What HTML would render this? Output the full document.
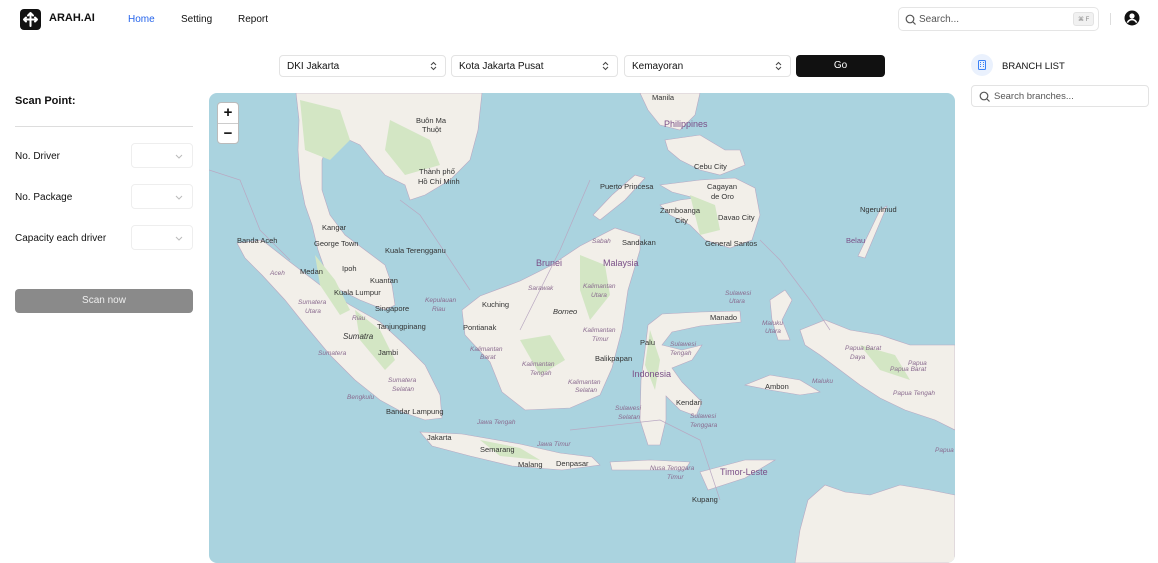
<!DOCTYPE html>
<html><head><meta charset="utf-8"><style>
*{box-sizing:border-box;margin:0;padding:0}
body{width:1158px;height:554px;overflow:hidden;background:#fff;font-family:"Liberation Sans",sans-serif;color:#111;position:relative}
.abs{position:absolute}
.nav{font-size:10px}
.sel{position:absolute;top:55px;height:22px;border:1px solid #e3e3e3;border-radius:4px;font-size:10px;padding:5px 7px;background:#fff}
.lbl{position:absolute;left:15px;font-size:10px}
.dd{position:absolute;left:131px;width:62px;height:25px;border:1px solid #eee;border-radius:4px}
.m{font-family:"Liberation Sans",sans-serif;font-size:7.5px;fill:#333}
.mi{font-family:"Liberation Sans",sans-serif;font-size:6.5px;fill:#8a6b8f;font-style:italic}
</style></head><body>
<div class="abs" style="left:20px;top:9px;width:21px;height:21px;background:#111;border-radius:4px">
<svg width="21" height="21" viewBox="0 0 21 21"><path d="M10.5 4v13M10.5 4l-2.5 2.5M10.5 4l2.5 2.5M4 10.5h13M4 10.5l2 -2M4 10.5l2 2M17 10.5l-2-2M17 10.5l-2 2" stroke="#fff" stroke-width="2" fill="none" stroke-linecap="round"/></svg></div>
<div class="abs" style="left:49px;top:12px;font-size:11px;font-weight:bold">ARAH.AI</div>
<div class="abs nav" style="left:128px;top:14px;color:#2463eb">Home</div>
<div class="abs nav" style="left:181px;top:14px">Setting</div>
<div class="abs nav" style="left:238px;top:14px">Report</div>
<div class="abs" style="left:898px;top:7px;width:201px;height:24px;border:1px solid #e5e5e5;border-radius:5px;font-size:10px;color:#555;padding:6px 0 0 20px">Search...
<svg class="abs" style="left:6px;top:6px" width="11" height="11"><circle cx="5" cy="5" r="3.8" stroke="#555" fill="none" stroke-width="1.2"/><path d="M8 8l2.5 2.5" stroke="#555" stroke-width="1.2"/></svg>
<div class="abs" style="left:174px;top:4px;width:21px;height:14px;background:#f1f1f1;border:1px solid #e3e3e3;border-radius:3px;font-size:6px;color:#888;padding:3px 0 0 4px">⌘ F</div></div>
<div class="abs" style="left:1110px;top:13px;width:1px;height:12px;background:#ddd"></div>
<svg class="abs" style="left:1124px;top:10px" width="16" height="16"><circle cx="8" cy="8" r="7.5" fill="#111"/><circle cx="8" cy="6" r="2.6" fill="#fff"/><path d="M3.3 12.6c1.3-2.2 3-3 4.7-3s3.4.8 4.7 3" stroke="#fff" stroke-width="1.6" fill="none"/></svg>

<div class="sel" style="left:279px;width:167px">DKI Jakarta<svg class="abs" style="right:8px;top:5px" width="7" height="10"><path d="M1 4l2.5-2.5L6 4M1 6l2.5 2.5L6 6" stroke="#444" fill="none"/></svg></div>
<div class="sel" style="left:451px;width:167px">Kota Jakarta Pusat<svg class="abs" style="right:8px;top:5px" width="7" height="10"><path d="M1 4l2.5-2.5L6 4M1 6l2.5 2.5L6 6" stroke="#444" fill="none"/></svg></div>
<div class="sel" style="left:624px;width:167px">Kemayoran<svg class="abs" style="right:8px;top:5px" width="7" height="10"><path d="M1 4l2.5-2.5L6 4M1 6l2.5 2.5L6 6" stroke="#444" fill="none"/></svg></div>
<div class="abs" style="left:796px;top:55px;width:89px;height:22px;background:#111;border-radius:4px;color:#fff;font-size:10px;text-align:center;line-height:22px">Go</div>

<div class="abs" style="left:971px;top:54px;width:22px;height:22px;border-radius:50%;background:#eaf1fd"><svg class="abs" style="left:7px;top:6px" width="8" height="10"><rect x=".5" y=".5" width="7" height="9" rx="1" fill="none" stroke="#3b82f6"/><path d="M2 2.5h1M5 2.5h1M2 4.5h1M5 4.5h1M2 6.5h1M5 6.5h1" stroke="#3b82f6"/></svg></div>
<div class="abs" style="left:1002px;top:61px;font-size:9.5px">BRANCH LIST</div>
<div class="abs" style="left:971px;top:85px;width:178px;height:22px;border:1px solid #e3e3e3;border-radius:4px;font-size:9.5px;color:#555;padding:5px 0 0 22px">Search branches...
<svg class="abs" style="left:7px;top:5px" width="11" height="11"><circle cx="5" cy="5" r="3.8" stroke="#555" fill="none" stroke-width="1.2"/><path d="M8 8l2.5 2.5" stroke="#555" stroke-width="1.2"/></svg></div>

<div class="abs" style="left:15px;top:95px;font-size:11px;font-weight:bold">Scan Point:</div>
<div class="abs" style="left:15px;top:126px;width:178px;height:1px;background:#ddd"></div>
<div class="lbl" style="top:151px">No. Driver</div><div class="dd" style="top:143px"><svg class="abs" style="right:9px;top:10px" width="8" height="5"><path d="M1 1l3 3 3-3" stroke="#bbb" fill="none"/></svg></div>
<div class="lbl" style="top:192px">No. Package</div><div class="dd" style="top:184px"><svg class="abs" style="right:9px;top:10px" width="8" height="5"><path d="M1 1l3 3 3-3" stroke="#bbb" fill="none"/></svg></div>
<div class="lbl" style="top:233px">Capacity each driver</div><div class="dd" style="top:225px"><svg class="abs" style="right:9px;top:10px" width="8" height="5"><path d="M1 1l3 3 3-3" stroke="#bbb" fill="none"/></svg></div>
<div class="abs" style="left:15px;top:289px;width:178px;height:24px;background:#8a8a8a;border-radius:4px;color:#eee;font-size:10px;text-align:center;line-height:24px">Scan now</div>

<div class="abs" style="left:209px;top:93px;width:746px;height:470px;border-radius:8px;overflow:hidden;background:#aad3df">
<svg width="746" height="470" viewBox="209 93 746 470">
<g fill="#f2efe9" stroke="#b9a8c2" stroke-width=".6">
<!-- Indochina + Malay peninsula -->
<path d="M296 93H482L478 130 470 160 450 180 425 195 410 200 405 185 385 175 372 160 360 145 345 138 330 140 322 160 322 190 330 215 345 235 365 250 385 265 392 285 395 305 385 310 360 300 340 290 325 270 318 250 312 225 305 205 300 180 298 150 299 120Z"/>
<!-- Sumatra -->
<path d="M237 243L262 240 290 262 320 285 350 305 380 322 405 345 425 365 440 395 442 418 425 420 402 412 380 400 355 380 330 355 305 325 285 300 262 275 245 258Z"/>
<!-- Borneo -->
<path d="M465 335L462 310 480 296 520 281 550 266 580 246 615 228 640 236 640 250 628 290 622 330 612 368 600 395 570 408 525 410 502 392 490 362Z"/>
<!-- Sulawesi -->
<path d="M648 325L662 314 700 312 740 311 741 322 700 326 672 332 662 345 682 350 702 345 692 360 672 368 682 382 702 402 696 416 680 410 666 396 666 420 660 445 648 445 640 420 641 380 645 350Z"/>
<!-- Java & Bali -->
<path d="M420 432L462 434 520 444 560 453 592 457 600 465 562 470 512 466 470 456 432 446Z"/>
<!-- Nusa Tenggara -->
<path d="M610 462L650 460 690 462 685 470 645 470 612 470Z"/>
<path d="M700 472L745 460 775 460 745 478 708 490Z"/>
<!-- Philippines -->
<path d="M640 93H700L695 115 680 130 660 125 648 110Z"/>
<path d="M665 140L700 135 725 150 740 150 745 165 720 175 700 170 680 160 668 150Z"/>
<path d="M660 185L700 180 735 178 755 188 760 215 752 240 730 248 705 240 690 225 670 215 660 205 680 200 695 198 672 192Z"/>
<path d="M635 175L645 178 625 200 600 220 593 215 612 195Z"/>
<!-- Halmahera / Maluku -->
<path d="M770 300L785 290 792 300 782 320 790 340 778 340 772 320Z"/>
<path d="M745 385L770 375 800 380 820 392 800 395 770 390Z"/>
<!-- Papua -->
<path d="M800 330L825 320 850 330 880 335 910 345 955 345V430L935 420 905 410 880 398 860 385 840 370 820 355 805 345Z"/>
<!-- Australia -->
<path d="M808 500L825 485 845 492 870 495 900 485 930 490 955 495V563H795L800 530Z"/>
<!-- Palau -->
<path d="M880 210L887 206 865 258 858 256Z"/>
</g>
<g fill="#d3e6c4">
<path d="M300 100l40 10 10 30-20 20-25-10z"/><path d="M390 120l40 20 10 25-35 10-20-25z"/>
<path d="M315 255l20 25 15 30-10 5-20-30z"/><path d="M355 310l25 20 15 30-10 10-25-30z"/>
<path d="M580 255l25 10 5 30-20 25-10-30z"/><path d="M520 340l30-5 15 25-25 15z"/>
<path d="M690 195l25 10 5 25-20 5z"/><path d="M860 345l35 10 15 25-30-10z"/>
<path d="M480 440l40 8 20 12-40-4z"/><path d="M650 330l10 30-5 30-10-25z"/>
</g>
<g fill="none" stroke="#b9a8c2" stroke-width=".7">
<path d="M209 170L240 180 260 230 290 260"/><path d="M590 180L560 250 520 330"/>
<path d="M760 240L780 260 810 300 830 330"/><path d="M400 200L420 215 470 290"/>
<path d="M570 430L660 420 700 440 720 500"/>
</g>
<g class="m">
<text x="652" y="100">Manila</text><text x="664" y="127" font-size="9" fill="#7a4f87">Philippines</text><text x="600" y="189">Puerto Princesa</text><text x="694" y="169">Cebu City</text><text x="707" y="189">Cagayan</text><text x="711" y="199">de Oro</text><text x="660" y="213">Zamboanga</text><text x="675" y="223">City</text><text x="718" y="220">Davao City</text><text x="860" y="212">Ngerulmud</text><text x="237" y="243">Banda Aceh</text><text x="314" y="246">George Town</text><text x="385" y="253">Kuala Terengganu</text><text x="300" y="274">Medan</text><text x="342" y="271">Ipoh</text><text x="370" y="283">Kuantan</text><text x="334" y="295">Kuala Lumpur</text><text x="375" y="311">Singapore</text><text x="377" y="329">Tanjungpinang</text><text x="343" y="339" font-style="italic" font-size="8">Sumatra</text><text x="378" y="355">Jambi</text><text x="482" y="307">Kuching</text><text x="463" y="330">Pontianak</text><text x="536" y="266" font-size="9" fill="#7a4f87">Brunei</text><text x="603" y="266" font-size="9" fill="#7a4f87">Malaysia</text><text x="553" y="314" font-style="italic">Borneo</text><text x="622" y="245">Sandakan</text><text x="705" y="246">General Santos</text><text x="710" y="320">Manado</text><text x="640" y="345">Palu</text><text x="632" y="377" font-size="9" fill="#7a4f87">Indonesia</text><text x="595" y="361">Balikpapan</text><text x="676" y="405">Kendari</text><text x="765" y="389">Ambon</text><text x="386" y="414">Bandar Lampung</text><text x="427" y="440">Jakarta</text><text x="480" y="452">Semarang</text><text x="518" y="467">Malang</text><text x="556" y="466">Denpasar</text><text x="720" y="475" font-size="9" fill="#7a4f87">Timor-Leste</text><text x="692" y="502">Kupang</text><text x="416" y="123">Buôn Ma</text><text x="422" y="132">Thuột</text><text x="419" y="174">Thành phố</text><text x="418" y="184">Hồ Chí Minh</text><text x="322" y="230">Kangar</text><text x="846" y="243" fill="#7a4f87">Belau</text>
</g>
<g class="mi"><text x="270" y="275">Aceh</text><text x="298" y="304">Sumatera</text><text x="305" y="313">Utara</text><text x="352" y="320">Riau</text><text x="425" y="302">Kepulauan</text><text x="432" y="311">Riau</text><text x="318" y="355">Sumatera</text><text x="388" y="382">Sumatera</text><text x="392" y="391">Selatan</text><text x="347" y="399">Bengkulu</text><text x="477" y="424">Jawa Tengah</text><text x="537" y="446">Jawa Timur</text><text x="528" y="290">Sarawak</text><text x="592" y="243">Sabah</text><text x="583" y="288">Kalimantan</text><text x="591" y="297">Utara</text><text x="583" y="332">Kalimantan</text><text x="592" y="341">Timur</text><text x="470" y="351">Kalimantan</text><text x="480" y="359">Barat</text><text x="522" y="366">Kalimantan</text><text x="530" y="375">Tengah</text><text x="568" y="384">Kalimantan</text><text x="575" y="392">Selatan</text><text x="670" y="346">Sulawesi</text><text x="670" y="355">Tengah</text><text x="615" y="410">Sulawesi</text><text x="618" y="419">Selatan</text><text x="690" y="418">Sulawesi</text><text x="690" y="427">Tenggara</text><text x="725" y="295">Sulawesi</text><text x="729" y="303">Utara</text><text x="650" y="470">Nusa Tenggara</text><text x="667" y="479">Timur</text><text x="845" y="350">Papua Barat</text><text x="850" y="359">Daya</text><text x="890" y="371">Papua Barat</text><text x="908" y="365">Papua</text><text x="893" y="395">Papua Tengah</text><text x="812" y="383">Maluku</text><text x="762" y="325">Maluku</text><text x="765" y="333">Utara</text><text x="935" y="452">Papua</text></g>
</svg>
<div class="abs" style="left:8px;top:9px;width:22px;height:42px;background:#fff;border:1px solid #bbb;border-radius:4px;font-size:15px;font-weight:bold;text-align:center;line-height:20px">+<div style="height:1px;background:#ccc"></div>−</div>
</div>
</body></html>
